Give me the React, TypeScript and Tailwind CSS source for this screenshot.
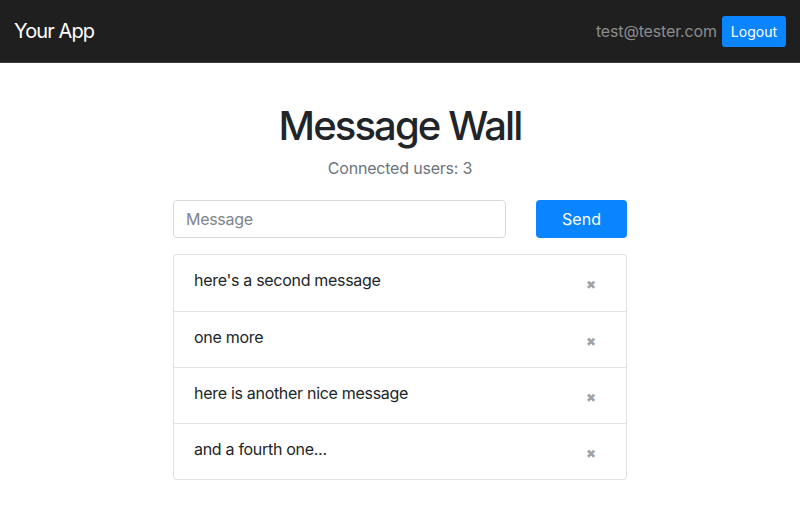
import React from "react";

const messages = [
  "here's a second message",
  "one more",
  "here is another nice message",
  "and a fourth one...",
];

export default function App() {
  return (
    <div className="min-h-[519px] bg-white text-[#212529]" style={{ fontFamily: "Inter, 'Liberation Sans', sans-serif" }}>
      <nav className="flex h-[63px] items-center justify-between border-b border-[#3a3a3a] bg-[#1f1f1f] pl-[14px] pr-[14px]">
        <span className="text-[20px] tracking-[-0.9px] text-white">Your App</span>
        <div className="flex items-center gap-[5px]">
          <span className="text-[16px] tracking-[-0.15px] text-[#8c8c8c]">test@tester.com</span>
          <button className="h-[31px] rounded-[3px] bg-[#0a84ff] px-[9px] text-[14px] text-white">Logout</button>
        </div>
      </nav>
      <main className="mx-auto flex w-[454px] flex-col items-center pt-[39px]">
        <h1 className="text-[40px] leading-[48px] font-medium tracking-[-1.9px] text-[#212529]">Message Wall</h1>
        <p className="mt-[6px] text-[16px] leading-[24px] tracking-[-0.2px] text-[#6c757d]">Connected users: 3</p>
        <div className="mt-[20px] flex w-full items-center justify-between">
          <input
            placeholder="Message"
            className="h-[38px] w-[333px] rounded-[4px] border border-[#d6d9dc] px-[12px] text-[16px] tracking-[-0.3px] placeholder:text-[#7d848b] outline-none"
          />
          <button className="h-[38px] w-[91px] rounded-[4px] bg-[#0a84ff] text-[16px] text-white">Send</button>
        </div>
        <ul className="mt-[16px] w-full rounded-[4px] border border-[#dfe1e4]">
          {messages.map((m, i) => (
            <li
              key={i}
              className={`flex h-[56px] items-start justify-between px-[20px] pt-[13px] ${i > 0 ? "border-t border-[#dfe1e4]" : ""}`}
            >
              <span className="text-[16px] leading-[24px] tracking-[-0.3px] text-[#212529]">{m}</span>
              <span
                className="mt-[10px] mr-[10px] text-[12px] leading-[14px] text-[#a0a3a6]"
                style={{ fontFamily: "'DejaVu Sans', sans-serif" }}
              >
                ✖
              </span>
            </li>
          ))}
        </ul>
      </main>
    </div>
  );
}
